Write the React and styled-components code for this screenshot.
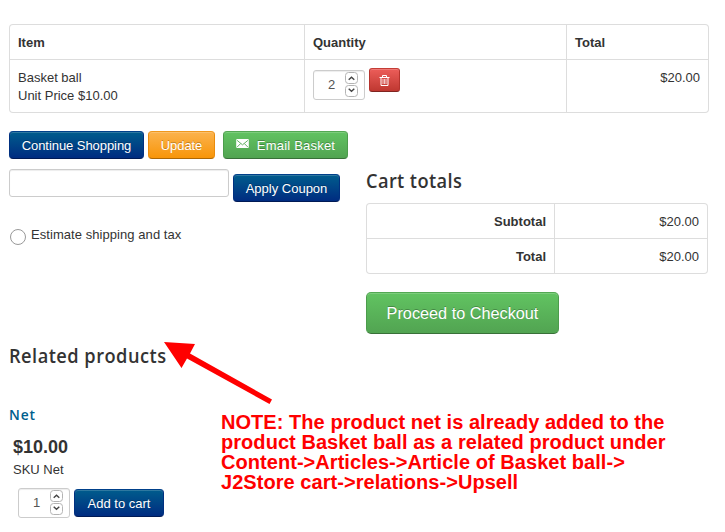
import React from "react";
import styled, { createGlobalStyle, css } from "styled-components";

const GlobalStyle = createGlobalStyle`
  * { box-sizing: border-box; }
  body {
    margin: 0;
    background: #fff;
    color: #333;
    font: 13px/18px "Liberation Sans", Arial, sans-serif;
  }
`;

const Page = styled.main`
  position: relative;
  width: 725px;
  height: 532px;
  padding: 24px 16px 0 9px;
  overflow: hidden;
  white-space: nowrap;
`;

const Table = styled.div`
  display: grid;
  grid-template-columns: ${(p) => p.$columns};
  grid-template-rows: ${(p) => p.$rows};
  width: ${(p) => p.$width}px;
  gap: 1px;
  padding: 1px;
  background: #ddd;
  border-radius: 4px;
  overflow: hidden;
`;

const corners = { tl: "3px 0 0 0", tr: "0 3px 0 0", bl: "0 0 0 3px", br: "0 0 3px 0" };

const Cell = styled.div`
  padding: 9px 8px 0;
  background: #fff;
  text-align: ${(p) => (p.$right ? "right" : "left")};
  font-weight: ${(p) => (p.$bold ? 700 : 400)};
  border-radius: ${(p) => corners[p.$corner] || 0};
`;

const ControlCell = styled(Cell)`
  display: flex;
  align-items: flex-start;
  gap: 4px;
  padding-top: 8px;
`;

const variants = {
  blue: css`
    background: linear-gradient(#005e8d, #002a80);
    border-color: #00408a #003080 #001a55;
  `,
  orange: css`
    background: linear-gradient(#fbb450, #f89406);
    border-color: #f0981c #e98b0c #ad6704;
  `,
  green: css`
    background: linear-gradient(#62c462, #51a351);
    border-color: #53a853 #4c9c4c #387038;
  `,
  red: css`
    background: linear-gradient(#ee5f5b, #bd362f);
    border-color: #c43c35 #b5332d #802420;
  `,
};

const Button = styled.button`
  display: flex;
  flex: none;
  align-items: center;
  justify-content: center;
  width: ${(p) => p.$width}px;
  height: ${(p) => p.$height || 28}px;
  padding: ${(p) => p.$drop ?? 2}px 0 0;
  border: 1px solid;
  border-radius: ${(p) => p.$radius || 4}px;
  color: #fff;
  font: inherit;
  font-size: ${(p) => p.$size || 13}px;
  letter-spacing: ${(p) => p.$tracking || 0}px;
  text-shadow: 0 -1px 0 rgba(0, 0, 0, 0.25);
  box-shadow: inset 0 1px 0 rgba(255, 255, 255, 0.18);
  ${(p) => variants[p.$variant]}
  background-origin: border-box;
`;

const Stepper = styled.div`
  display: flex;
  flex: none;
  align-items: center;
  justify-content: space-between;
  width: 52px;
  height: 30px;
  margin-top: ${(p) => p.$drop || 0}px;
  padding: 0 6px 0 14px;
  border: 1px solid #ccc;
  border-radius: 3px;
  color: #555;
  box-shadow: inset 0 1px 1px rgba(0, 0, 0, 0.075);
`;

const Arrows = styled.svg`
  display: block;
  width: 13px;
  height: 26px;
`;

const Columns = styled.div`
  display: grid;
  grid-template-columns: 357px 342px;
  margin-top: 18px;
`;

const Actions = styled.div`
  display: flex;
  gap: 4px;

  & > :last-child { margin-left: 4px; }
`;

const EmailIcon = styled.svg`
  width: 13px;
  height: 9px;
  margin: -5px 8px 0 0;
`;

const CouponRow = styled.div`
  display: flex;
  gap: 4px;
  margin-top: 10px;

  & > button { margin-top: 5px; }
`;

const CouponInput = styled.input`
  width: 220px;
  height: 28px;
  border: 1px solid #ccc;
  border-radius: 3px;
  box-shadow: inset 0 1px 1px rgba(0, 0, 0, 0.075);
`;

const EstimateOption = styled.label`
  display: flex;
  gap: 5px;
  margin-top: 24px;
  padding-left: 1px;
  letter-spacing: 0.06px;
`;

const Radio = styled.input`
  appearance: none;
  flex: none;
  width: 16px;
  height: 16px;
  margin: 3px 0 0;
  border: 1px solid #999;
  border-radius: 50%;
  background: #fff;
`;

const Totals = styled.section`
  padding-top: 38px;
`;

const Heading = styled.h3`
  margin: 0;
  font: 600 19.5px/24px "Open Sans", sans-serif;
  letter-spacing: ${(p) => p.$tracking}px;
  transform: scaleX(0.935);
  transform-origin: left;
`;

const TotalsBody = styled.div`
  display: flex;
  flex-direction: column;
  align-items: flex-start;
  gap: 18px;
  margin-top: 10px;
`;

const Related = styled.section`
  margin-top: 10px;
`;

const ProductLink = styled.h4`
  margin: 36px 0 0;
  color: #005e8d;
  font: 600 15px/20px "Open Sans", sans-serif;
  letter-spacing: 1px;
  transform: scaleX(0.92);
  transform-origin: left;
`;

const Product = styled.div`
  padding: 13px 0 0 4px;
`;

const Price = styled.div`
  font-size: 18px;
  font-weight: 700;
  line-height: 20px;
`;

const Sku = styled.div`
  margin-top: 4px;
`;

const PurchaseRow = styled.div`
  display: flex;
  gap: 4px;
  margin-top: 9px;
  padding-left: 5px;

  & > button { margin-top: 1px; }
`;

const Note = styled.p`
  position: absolute;
  top: 412px;
  left: 221px;
  margin: 0;
  color: #f00;
  font-size: 20px;
  font-weight: 700;
  line-height: 20px;
  letter-spacing: 0.05px;
`;

const Pointer = styled.svg`
  position: absolute;
  top: 335px;
  left: 160px;
  width: 120px;
  height: 75px;
`;

function Quantity({ value, drop }) {
  return (
    <Stepper $drop={drop}>
      <span>{value}</span>
      <Arrows viewBox="0 0 13 26" fill="none">
        <rect x=".5" y=".5" width="12" height="11" rx="3" stroke="#b4b4b4" />
        <rect x=".5" y="13.5" width="12" height="11" rx="3" stroke="#b4b4b4" />
        <path d="M3.7 7.8 6.5 5.2 9.3 7.8M3.7 16.7 6.5 19.3 9.3 16.7" stroke="#444" strokeWidth="1.4" />
      </Arrows>
    </Stepper>
  );
}

function Trash() {
  return (
    <svg width="11" height="11" viewBox="0 0 11 11" fill="none" stroke="#fff">
      <path d="M.5 2.5h10M3.5 2V.5h4V2M2 3v7.5h7V3" />
      <path d="M4 4v5M5.5 4v5M7 4v5" strokeWidth=".7" />
    </svg>
  );
}

export default function App() {
  return (
    <Page>
      <GlobalStyle />
      <Table $width={700} $columns="294px 261px 141px" $rows="34px 52px">
        <Cell $bold $corner="tl">Item</Cell>
        <Cell $bold>Quantity</Cell>
        <Cell $bold $corner="tr">Total</Cell>
        <Cell $corner="bl">Basket ball<br />Unit Price $10.00</Cell>
        <ControlCell>
          <Quantity value="2" drop={2} />
          <Button $variant="red" $width={31} $height={24} $radius={3} $drop={0} aria-label="Remove">
            <Trash />
          </Button>
        </ControlCell>
        <Cell $right $corner="br">$20.00</Cell>
      </Table>

      <Columns>
        <section>
          <Actions>
            <Button $variant="blue" $width={135} $tracking={-0.06}>Continue Shopping</Button>
            <Button $variant="orange" $width={67} $tracking={-0.06}>Update</Button>
            <Button $variant="green" $width={125} $tracking={0.2}>
              <EmailIcon viewBox="0 0 14 10">
                <rect width="14" height="10" rx="1" fill="#fff" />
                <path d="M1 1.5 7 6.5 13 1.5M1 9 5 5M13 9 9 5" fill="none" stroke="#55aa55" />
              </EmailIcon>
              Email Basket
            </Button>
          </Actions>
          <CouponRow>
            <CouponInput aria-label="Coupon" />
            <Button $variant="blue" $width={107}>Apply Coupon</Button>
          </CouponRow>
          <EstimateOption>
            <Radio type="radio" />
            Estimate shipping and tax
          </EstimateOption>
        </section>

        <Totals>
          <Heading $tracking={0.4}>Cart totals</Heading>
          <TotalsBody>
            <Table $width={342} $columns="187px 152px" $rows="34px 34px">
              <Cell $right $bold $corner="tl">Subtotal</Cell>
              <Cell $right $corner="tr">$20.00</Cell>
              <Cell $right $bold $corner="bl">Total</Cell>
              <Cell $right $corner="br">$20.00</Cell>
            </Table>
            <Button $variant="green" $width={193} $height={42} $radius={5} $size={16.25} $drop={0}>
              Proceed to Checkout
            </Button>
          </TotalsBody>
        </Totals>
      </Columns>

      <Related>
        <Heading $tracking={0.5}>Related products</Heading>
        <ProductLink>Net</ProductLink>
        <Product>
          <Price>$10.00</Price>
          <Sku>SKU Net</Sku>
          <PurchaseRow>
            <Quantity value="1" />
            <Button $variant="blue" $width={90}>Add to cart</Button>
          </PurchaseRow>
        </Product>
      </Related>

      <Note>
        NOTE: The product net is already added to the<br />
        product Basket ball as a related product under<br />
        Content-&gt;Articles-&gt;Article of Basket ball-&gt;<br />
        J2Store cart-&gt;relations-&gt;Upsell
      </Note>
      <Pointer viewBox="160 335 120 75">
        <path d="M164 342 195 344 190 353.5 272 399.5 269.5 404 187 358.5 181.5 368Z" fill="#f00" />
      </Pointer>
    </Page>
  );
}
